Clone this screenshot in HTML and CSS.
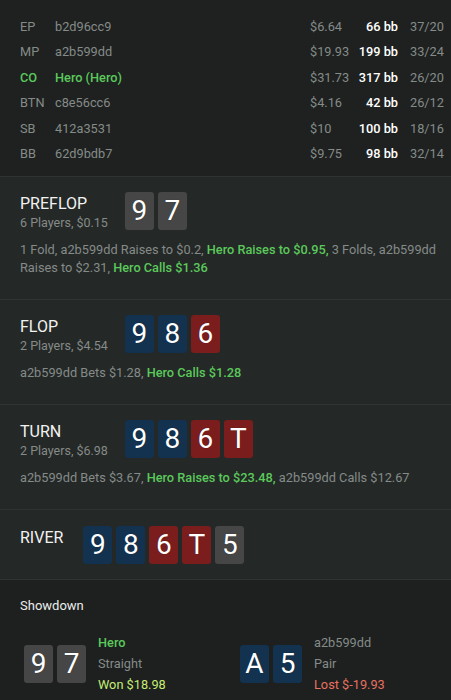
FILE: index.html
```html
<!DOCTYPE html>
<html>
<head>
<meta charset="utf-8">
<link rel="stylesheet" href="styles.css">
</head>
<body>
<div class="players">
  <div class="prow"><span class="pos">EP</span><span class="pname">b2d96cc9</span><span class="stack">$6.64</span><span class="bb">66 bb</span><span class="ratio">37/20</span></div>
  <div class="prow"><span class="pos">MP</span><span class="pname">a2b599dd</span><span class="stack">$19.93</span><span class="bb">199 bb</span><span class="ratio">33/24</span></div>
  <div class="prow hero"><span class="pos">CO</span><span class="pname">Hero (Hero)</span><span class="stack">$31.73</span><span class="bb">317 bb</span><span class="ratio">26/20</span></div>
  <div class="prow"><span class="pos">BTN</span><span class="pname">c8e56cc6</span><span class="stack">$4.16</span><span class="bb">42 bb</span><span class="ratio">26/12</span></div>
  <div class="prow"><span class="pos">SB</span><span class="pname">412a3531</span><span class="stack">$10</span><span class="bb">100 bb</span><span class="ratio">18/16</span></div>
  <div class="prow"><span class="pos">BB</span><span class="pname">62d9bdb7</span><span class="stack">$9.75</span><span class="bb">98 bb</span><span class="ratio">32/14</span></div>
</div>

<section class="street">
  <div class="head">
    <div class="info">
      <div class="title">PREFLOP</div>
      <div class="sub">6 Players, $0.15</div>
    </div>
    <div class="cards"><span class="card gray">9</span><span class="card gray">7</span></div>
  </div>
  <p class="actions">1 Fold, a2b599dd Raises to $0.2, <b>Hero Raises to $0.95,</b> 3 Folds, a2b599dd Raises to $2.31, <b>Hero Calls $1.36</b></p>
</section>

<section class="street">
  <div class="head">
    <div class="info">
      <div class="title">FLOP</div>
      <div class="sub">2 Players, $4.54</div>
    </div>
    <div class="cards"><span class="card blue">9</span><span class="card blue">8</span><span class="card red">6</span></div>
  </div>
  <p class="actions">a2b599dd Bets $1.28, <b>Hero Calls $1.28</b></p>
</section>

<section class="street">
  <div class="head">
    <div class="info">
      <div class="title">TURN</div>
      <div class="sub">2 Players, $6.98</div>
    </div>
    <div class="cards"><span class="card blue">9</span><span class="card blue">8</span><span class="card red">6</span><span class="card red">T</span></div>
  </div>
  <p class="actions">a2b599dd Bets $3.67, <b>Hero Raises to $23.48,</b> a2b599dd Calls $12.67</p>
</section>

<section class="street river">
  <div class="head">
    <div class="info">
      <div class="title">RIVER</div>
    </div>
    <div class="cards"><span class="card blue">9</span><span class="card blue">8</span><span class="card red">6</span><span class="card red">T</span><span class="card gray">5</span></div>
  </div>
</section>

<section class="showdown">
  <div class="sd-title">Showdown</div>
  <div class="sd-players">
    <div class="sd-player">
      <div class="cards"><span class="card gray">9</span><span class="card gray">7</span></div>
      <div class="sd-info">
        <div class="sd-name hero-name">Hero</div>
        <div class="sd-hand">Straight</div>
        <div class="sd-won">Won $18.98</div>
      </div>
    </div>
    <div class="sd-player">
      <div class="cards"><span class="card blue">A</span><span class="card blue">5</span></div>
      <div class="sd-info">
        <div class="sd-name">a2b599dd</div>
        <div class="sd-hand">Pair</div>
        <div class="sd-lost">Lost $-19.93</div>
      </div>
    </div>
  </div>
</section>
</body>
</html>
```

FILE: styles.css
```css
html {
  background: #1d201f;
}
body {
  margin: 0;
  font-family: Roboto, "Noto Sans", sans-serif;
  font-size: 12.75px;
  color: #858b88;
  overflow: hidden;
  height: 700px;
}
.players {
  background: #1e2120;
  padding: 14px 0 10px 20px;
  border-bottom: 1px solid #2f3432;
}
.prow {
  display: grid;
  grid-template-columns: 35px 1fr 45px 43px 53px;
  line-height: 25.4px;
  white-space: nowrap;
}
.prow .bb {
  text-align: right;
  color: #ffffff;
  font-weight: 500;
}
.prow .ratio {
  padding-left: 12px;
}
.prow.hero .pos,
.prow.hero .pname {
  color: #5bc95b;
  font-weight: 500;
}
.street {
  background: #242827;
  padding: 15px 10px 22px 20px;
  border-bottom: 1px solid #2f3432;
}
.street.river {
  padding: 16px 20px 15px;
}
.head {
  display: flex;
  gap: 17px;
  align-items: flex-start;
}
.river .head {
  gap: 20px;
}
.title {
  color: #f2f2f2;
  font-size: 16px;
  line-height: 20px;
  padding-top: 2px;
}
.sub {
  line-height: 17px;
  font-size: 12.5px;
}
.cards {
  display: flex;
  gap: 4px;
}
.card {
  width: 29px;
  height: 38px;
  border-radius: 3px;
  color: #ffffff;
  font-size: 28px;
  line-height: 38px;
  text-align: center;
  text-shadow: 0 0 1px rgba(0,0,0,0.4);
}
.card.gray { background: #464646; }
.card.blue { background: #13324f; }
.card.red { background: #7b1d1d; }
.actions {
  margin: 10px 0 0;
  line-height: 18px;
}
.actions b {
  color: #5bc95b;
  font-weight: 500;
}
.showdown {
  background: #1d201f;
  padding: 16px 20px 0;
}
.sd-title {
  color: #ececec;
  font-size: 13px;
  line-height: 20px;
}
.sd-players {
  display: grid;
  grid-template-columns: 216px 1fr;
  padding-left: 4px;
  margin-top: 16px;
}
.sd-player {
  display: flex;
  align-items: center;
  gap: 12px;
}
.sd-info {
  line-height: 21px;
}
.hero-name {
  color: #5bc95b;
  font-weight: 500;
}
.sd-won { color: #c6ec74; }
.sd-lost { color: #e8705f; }
```
